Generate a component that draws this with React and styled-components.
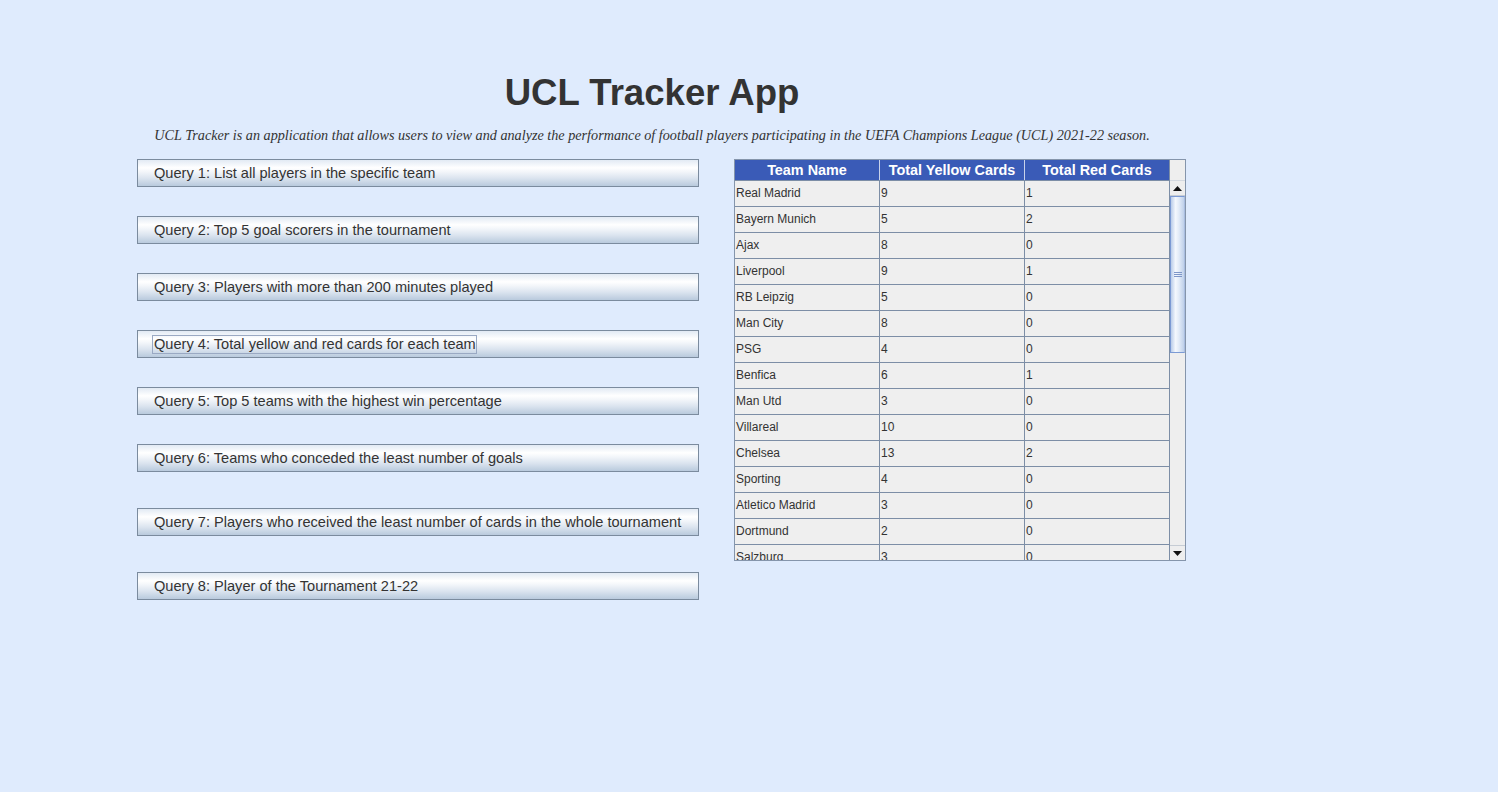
import React from "react";
import styled, { createGlobalStyle } from "styled-components";

const Global = createGlobalStyle`
  html, body { margin: 0; padding: 0; background: #dfebfd; }
  body { font-family: "Liberation Sans", Arial, sans-serif; }
  * { box-sizing: border-box; }
`;

const Page = styled.div`
  min-height: 100vh;
  background: #dfebfd;
  padding: 72px 0 0 137px;
`;

const Header = styled.header`
  width: 1030px;
  text-align: center;
`;

const Title = styled.h1`
  margin: 0;
  font-family: "Liberation Sans", Arial, sans-serif;
  font-weight: bold;
  font-size: 36.6px;
  line-height: 42px;
  color: #333333;
`;

const Subtitle = styled.p`
  margin: 12px 0 0;
  font-family: "Liberation Serif", "Times New Roman", serif;
  font-style: italic;
  font-size: 14.2px;
  line-height: 18px;
  color: #333333;
  white-space: nowrap;
`;

const Main = styled.main`
  display: flex;
  align-items: flex-start;
  gap: 35px;
  margin-top: 15px;
`;

const QueryList = styled.div`
  display: flex;
  flex-direction: column;
  width: 562px;
`;

const QueryButton = styled.button`
  display: flex;
  align-items: center;
  width: 562px;
  height: 28px;
  margin-top: ${(p) => (p.$first ? 0 : p.$spaced ? "36px" : "29px")};
  padding: 0 0 0 15px;
  border: 1px solid #7b8b9e;
  background: linear-gradient(
    to bottom,
    #e2eaf4 0%,
    #ffffff 30%,
    #f3f6fa 45%,
    #dbe4ef 70%,
    #b9cadd 100%
  );
  font-family: "Liberation Sans", Arial, sans-serif;
  font-size: 14.6px;
  color: #333333;
  text-align: left;
  cursor: pointer;
`;

const Label = styled.span`
  display: inline-block;
  line-height: 17px;
  padding: 0 0 0 1px;
  box-shadow: ${(p) => (p.$focused ? "0 0 0 1px #9aa9c3" : "none")};
`;

const TablePanel = styled.div`
  display: flex;
  width: 452px;
  height: 402px;
  border: 1px solid #8595ab;
  background: #efefef;
`;

const TableArea = styled.div`
  width: 435px;
  display: flex;
  flex-direction: column;
`;

const HeadRow = styled.div`
  display: grid;
  grid-template-columns: 145px 145px 145px;
  height: 21px;
  border-bottom: 1px solid #7d8ea6;
  background: #3a5bb7;
`;

const HeadCell = styled.div`
  display: flex;
  align-items: center;
  justify-content: center;
  height: 20px;
  border-right: 1px solid #c9d2ea;
  color: #ffffff;
  font-weight: bold;
  font-size: 14.4px;
  font-family: "Liberation Sans", Arial, sans-serif;
  white-space: nowrap;
  &:last-child { border-right: 1px solid #7d8ea6; }
`;

const Body = styled.div`
  height: 379px;
  overflow: hidden;
`;

const Row = styled.div`
  display: grid;
  grid-template-columns: 145px 145px 145px;
  height: 26px;
  border-bottom: 1px solid #7d8ea6;
`;

const Cell = styled.div`
  display: flex;
  align-items: center;
  padding: 0 0 1px 1px;
  border-right: 1px solid #7d8ea6;
  font-size: 12px;
  color: #333333;
  font-family: "Liberation Sans", Arial, sans-serif;
  white-space: nowrap;
`;

const ScrollBar = styled.div`
  width: 15px;
  display: flex;
  flex-direction: column;
  background: #eeeeee;
`;

const Corner = styled.div`
  height: 21px;
  border-bottom: 1px solid #d4d9e0;
  background: #eeeeee;
`;

const ArrowButton = styled.div`
  height: 15px;
  display: flex;
  align-items: center;
  justify-content: center;
  background: #eeeeee;
  border-top: ${(p) => (p.$down ? "1px solid #c6ccd4" : "none")};
  border-bottom: ${(p) => (p.$down ? "none" : "1px solid #c6ccd4")};
`;

const Track = styled.div`
  flex: 1;
  display: flex;
  flex-direction: column;
  background: #eeeeee;
`;

const Thumb = styled.div`
  height: 157px;
  border: 1px solid #7b9ad4;
  border-right-color: #a9bde0;
  background: linear-gradient(
    to right,
    #b9cce9 0%,
    #f4f8fd 35%,
    #e3ecf8 60%,
    #bfd0ea 100%
  );
  display: flex;
  align-items: center;
  justify-content: center;
`;

const Grip = styled.div`
  width: 8px;
  height: 5px;
  border-top: 1px solid #7d96c8;
  border-bottom: 1px solid #7d96c8;
  display: flex;
  align-items: center;
  &::after {
    content: "";
    display: block;
    width: 8px;
    height: 1px;
    background: #7d96c8;
  }
`;

const queries = [
  "Query 1: List all players in the specific team",
  "Query 2: Top 5 goal scorers in the tournament",
  "Query 3: Players with more than 200 minutes played",
  "Query 4: Total yellow and red cards for each team",
  "Query 5: Top 5 teams with the highest win percentage",
  "Query 6: Teams who conceded the least number of goals",
  "Query 7: Players who received the least number of cards in the whole tournament",
  "Query 8: Player of the Tournament 21-22",
];

const rows = [
  ["Real Madrid", 9, 1],
  ["Bayern Munich", 5, 2],
  ["Ajax", 8, 0],
  ["Liverpool", 9, 1],
  ["RB Leipzig", 5, 0],
  ["Man City", 8, 0],
  ["PSG", 4, 0],
  ["Benfica", 6, 1],
  ["Man Utd", 3, 0],
  ["Villareal", 10, 0],
  ["Chelsea", 13, 2],
  ["Sporting", 4, 0],
  ["Atletico Madrid", 3, 0],
  ["Dortmund", 2, 0],
  ["Salzburg", 3, 0],
];

const Arrow = ({ down }) => (
  <svg width="9" height="5" viewBox="0 0 9 5">
    {down ? (
      <polygon points="0,0 9,0 4.5,5" fill="#111" />
    ) : (
      <polygon points="0,5 9,5 4.5,0" fill="#111" />
    )}
  </svg>
);

export default function App() {
  return (
    <>
      <Global />
      <Page>
        <Header>
          <Title>UCL Tracker App</Title>
          <Subtitle>
            UCL Tracker is an application that allows users to view and analyze the performance of
            football players participating in the UEFA Champions League (UCL) 2021-22 season.
          </Subtitle>
        </Header>
        <Main>
          <QueryList>
            {queries.map((q, i) => (
              <QueryButton key={q} $first={i === 0} $spaced={i >= 6}>
                <Label $focused={i === 3}>{q}</Label>
              </QueryButton>
            ))}
          </QueryList>
          <TablePanel>
            <TableArea>
              <HeadRow>
                <HeadCell>Team Name</HeadCell>
                <HeadCell>Total Yellow Cards</HeadCell>
                <HeadCell>Total Red Cards</HeadCell>
              </HeadRow>
              <Body>
                {rows.map((r) => (
                  <Row key={r[0]}>
                    <Cell>{r[0]}</Cell>
                    <Cell>{r[1]}</Cell>
                    <Cell>{r[2]}</Cell>
                  </Row>
                ))}
              </Body>
            </TableArea>
            <ScrollBar>
              <Corner />
              <ArrowButton>
                <Arrow />
              </ArrowButton>
              <Track>
                <Thumb>
                  <Grip />
                </Thumb>
              </Track>
              <ArrowButton $down>
                <Arrow down />
              </ArrowButton>
            </ScrollBar>
          </TablePanel>
        </Main>
      </Page>
    </>
  );
}
